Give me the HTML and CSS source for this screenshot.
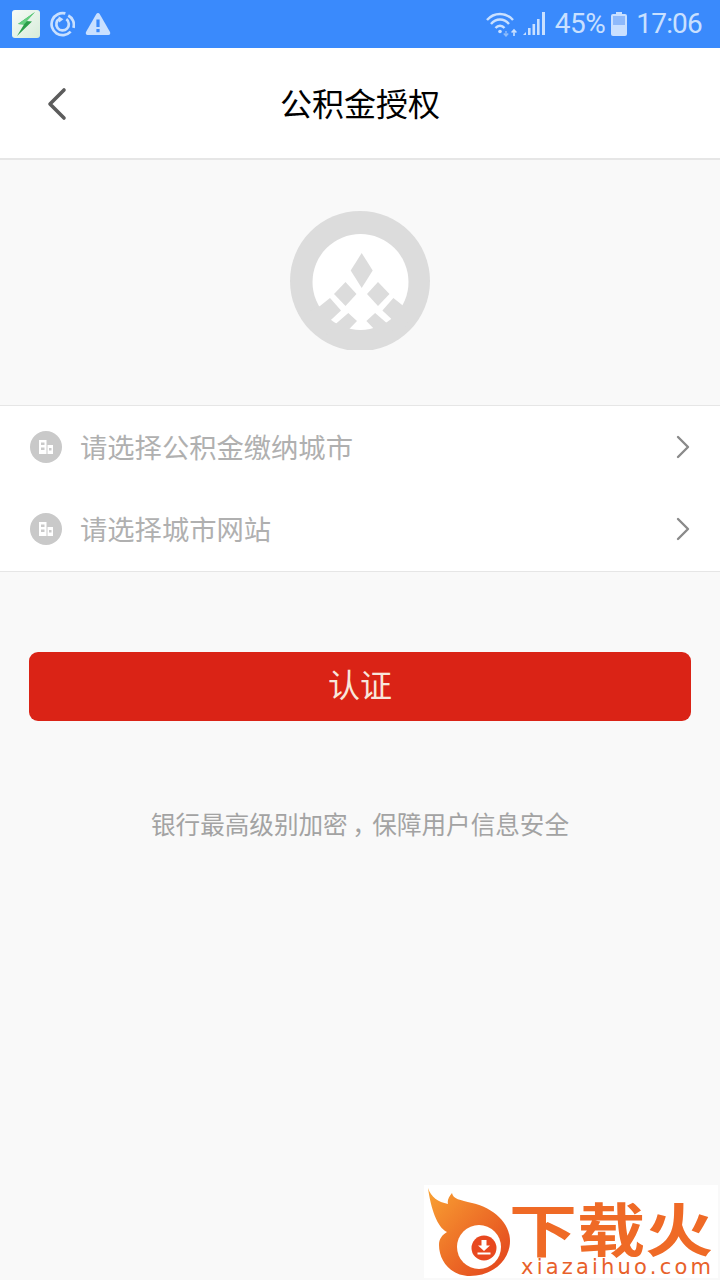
FILE: index.html
```html
<!DOCTYPE html>
<html>
<head>
<meta charset="utf-8">
<link rel="stylesheet" href="styles.css">
<title>公积金授权</title>
</head>
<body>
<div class="page">
  <div class="status-bar">
    <div class="status-left">
      <div class="app-icon">
        <svg width="28" height="28" viewBox="0 0 28 28">
          <path d="M23 2 L6 14 L12 14.5 L5 26 L20 11.5 L14 11 Z" fill="#2a9e49"/>
          <path d="M23 2 L6 14 L12 14.5 Z" fill="#63cf80"/>
        </svg>
      </div>
      <svg width="25" height="26" viewBox="0 0 26 26" fill="none" stroke="#c9e0ff">
        <path d="M16 2 A11.5 11.5 0 1 0 21.5 21" stroke-width="2.8"/>
        <path d="M19 4.2 A11 11 0 0 1 24.4 17" stroke-width="2.8"/>
        <path d="M10 7.5 A6.5 6.5 0 1 0 17 8" stroke-width="2.8"/>
        <path d="M9 5 L14 8 L9.5 11.5 Z" fill="#c9e0ff" stroke="none"/>
      </svg>
      <svg width="26" height="24" viewBox="0 0 26 24">
        <path d="M13 1 C13.8 1 14.3 1.4 14.7 2 L25 20 C25.7 21.4 25 23 23.4 23 L2.6 23 C1 23 .3 21.4 1 20 L11.3 2 C11.7 1.4 12.2 1 13 1 Z" fill="#c9e0ff"/>
        <rect x="11.4" y="7.5" width="3.2" height="7.5" fill="#3a8afc"/>
        <rect x="11.4" y="17" width="3.2" height="3.2" fill="#3a8afc"/>
      </svg>
    </div>
    <div class="status-right">
      <svg class="wifi" width="32" height="26" viewBox="0 0 32 26" fill="none" stroke="#c9e0ff" stroke-width="2.4">
        <path d="M1 9 C8 1 20 1 27 9"/>
        <path d="M5 13 C10 7 18 7 23 13"/>
        <path d="M9.5 17 C12 14 16 14 18.5 17"/>
        <circle cx="14" cy="20.5" r="1.8" fill="#c9e0ff" stroke="none"/>
        <path d="M20 25 V20 M17.8 22.5 L20 25 L22.2 22.5" stroke="#8fbdfb" stroke-width="1.4"/>
        <path d="M28 25 V19 M25.6 21.5 L28 19 L30.4 21.5" stroke-width="1.6"/>
      </svg>
      <svg class="signal" width="24" height="26" viewBox="0 0 24 26" fill="#c9e0ff">
        <path d="M1 24 L4 21 V24 Z"/>
        <rect x="6" y="17" width="2.6" height="7"/>
        <rect x="10.5" y="13" width="2.6" height="11"/>
        <rect x="15" y="8" width="2.6" height="16"/>
        <rect x="20" y="1" width="3" height="23"/>
      </svg>
      <span class="status-text percent">45%</span>
      <svg class="battery" width="16" height="24" viewBox="0 0 16 24">
        <rect x="5" y="0" width="6" height="3" fill="#c9e0ff"/>
        <rect x="0" y="2" width="16" height="22" rx="2" fill="#c9e0ff"/>
        <rect x="2" y="4" width="12" height="9" fill="#8db9fb"/>
      </svg>
      <span class="status-text clock">17:06</span>
    </div>
  </div>

  <div class="header">
    <svg class="back" width="24" height="34" viewBox="0 0 24 34" fill="none" stroke="#5c5c5c" stroke-width="3.6" stroke-linecap="round" stroke-linejoin="round">
      <path d="M19 3 L5 17 L19 31"/>
    </svg>
    <h1>公积金授权</h1>
  </div>

  <div class="logo-area">
    <svg width="140" height="139" viewBox="0 0 140 139">
      <circle cx="70" cy="70" r="70" fill="#dcdcdc"/>
      <circle cx="70.5" cy="71" r="48" fill="#fff"/>
      <g fill="#dcdcdc">
        <path d="M71.7 42 L82.7 59.5 L71.7 77 L60.7 59.5 Z"/>
        <path d="M55.5 71 L66.5 83 L55.5 95 L44 83 Z"/>
        <path d="M88 71 L99.5 83 L88 95 L77 83 Z"/>
        <path d="M30 95 L40 87 L51 99.5 L39 110.7 L42 125 L28 120 L20 100 Z"/>
        <path d="M113.4 95 L103.4 87 L92.4 99.5 L104.4 110.7 L101.4 125 L113 120 L123.4 100 Z"/>
        <path d="M58.3 102 L67 110 L58.3 119 L60 126 L35 126 L45 113.5 Z"/>
        <path d="M85.1 102 L76.4 110 L85.1 119 L83.4 126 L108.4 126 L98.4 113.5 Z"/>
      </g>
    </svg>
  </div>

  <div class="list">
    <div class="row">
      <div class="row-icon">
        <svg width="20" height="20" viewBox="0 0 20 20">
          <path d="M3 3 H10.5 V17 H3 Z M11.5 8 H17 V17 H11.5 Z" fill="#fff"/>
          <path d="M5 5.5 H8.5 V8 H5 Z M5 10.5 H8.5 V13 H5 Z M13 11 H15.5 V13.5 H13 Z" fill="#c9c9c9"/>
        </svg>
      </div>
      <span class="row-label">请选择公积金缴纳城市</span>
      <svg class="chevron" width="16" height="24" viewBox="0 0 16 24" fill="none" stroke="#8a8a8a" stroke-width="2.4" stroke-linecap="round" stroke-linejoin="round">
        <path d="M3 2 L13 12 L3 22"/>
      </svg>
    </div>
    <div class="row">
      <div class="row-icon">
        <svg width="20" height="20" viewBox="0 0 20 20">
          <path d="M3 3 H10.5 V17 H3 Z M11.5 8 H17 V17 H11.5 Z" fill="#fff"/>
          <path d="M5 5.5 H8.5 V8 H5 Z M5 10.5 H8.5 V13 H5 Z M13 11 H15.5 V13.5 H13 Z" fill="#c9c9c9"/>
        </svg>
      </div>
      <span class="row-label">请选择城市网站</span>
      <svg class="chevron" width="16" height="24" viewBox="0 0 16 24" fill="none" stroke="#8a8a8a" stroke-width="2.4" stroke-linecap="round" stroke-linejoin="round">
        <path d="M3 2 L13 12 L3 22"/>
      </svg>
    </div>
  </div>

  <div class="submit">认证</div>
  <p class="note">银行最高级别加密<span class="comma">，</span>保障用户信息安全</p>

  <div class="watermark">
    <svg class="flame" width="88" height="93" viewBox="0 0 88 93">
      <defs>
        <linearGradient id="flame-fill" x1="0" y1="0" x2="1" y2="1">
          <stop offset="0" stop-color="#f9a233"/>
          <stop offset="1" stop-color="#e2401c"/>
        </linearGradient>
      </defs>
      <path d="M4 3 C7 12 14 17 24 19 C23 15 25 12 28 8 C29 14 36 15 48 18 C70 23 86 38 86 56 C86 76 68 91 46 91 C27 91 15 76 15 60 C15 54 18 50 23 47 C13 42 7 24 4 3 Z" fill="url(#flame-fill)"/>
      <circle cx="55" cy="62" r="22" fill="#fff"/>
      <circle cx="60" cy="63" r="12.5" fill="#e8481f"/>
      <path d="M57.5 55 H62.5 V60.5 H66 L60 66 L54 60.5 H57.5 Z M53.5 67.5 H66.5 V69.5 H53.5 Z" fill="#fff"/>
    </svg>
    <div class="brand">
      <div class="brand-name">下载火</div>
      <div class="brand-url">xiazaihuo.com</div>
    </div>
  </div>
</div>
</body>
</html>
```

FILE: styles.css
```css
body {
	margin: 0;
	font-family: "Noto Sans CJK SC", "Noto Sans", sans-serif;
	background-color: #f9f9f9;
}
.page {
	position: relative;
	width: 720px;
	height: 1280px;
	overflow: hidden;
}
.status-bar {
	height: 48px;
	background-color: #3a8afc;
	display: flex;
	align-items: center;
	justify-content: space-between;
	padding: 0 18px 0 12px;
}
.status-left, .status-right {
	display: flex;
	align-items: center;
}
.status-left {
	gap: 10px;
}
.app-icon {
	width: 28px;
	height: 28px;
	border-radius: 3px;
	background-image: linear-gradient(135deg, #f7fbf7, #d6ecd9);
}
.app-icon svg {
	display: block;
}
.status-text {
	font-family: Roboto, sans-serif;
	font-size: 28px;
	line-height: 32px;
	color: #c9e0ff;
}
.percent {
	letter-spacing: -0.5px;
	margin-right: 6px;
}
.clock { letter-spacing: -0.8px; }
.wifi { margin-right: 4px; }
.signal { margin-right: 9px; }
.battery { margin-right: 9px; }
.header {
	position: relative;
	height: 110px;
	background-color: #fff;
	border-bottom: 2px solid #e6e6e6;
	display: flex;
	align-items: center;
	justify-content: center;
}
.header h1 {
	margin: 0;
	padding-bottom: 2px;
	font-size: 32px;
	font-weight: 400;
	color: #000;
}
.back {
	position: absolute;
	left: 45px;
	top: 39px;
}
.logo-area {
	height: 245px;
	display: flex;
	justify-content: center;
	align-items: flex-start;
	padding-top: 51px;
	box-sizing: border-box;
}
.list {
	background-color: #fff;
	border-top: 1px solid #e6e6e6;
	border-bottom: 1px solid #e6e6e6;
	padding-bottom: 1px;
}
.row {
	height: 82px;
	display: flex;
	align-items: center;
	padding: 0 29px 0 30px;
}
.row-icon {
	width: 32px;
	height: 32px;
	border-radius: 50%;
	background-color: #c9c9c9;
	display: flex;
	align-items: center;
	justify-content: center;
	margin-right: 18px;
}
.row-label {
	flex: 1;
	padding-bottom: 3px;
	font-size: 27.3px;
	color: #b0b0b0;
}
.submit {
	margin: 80px 29px 0;
	height: 69px;
	padding-bottom: 8px;
	box-sizing: border-box;
	border-radius: 9px;
	background-color: #da2316;
	color: #f8e6dc;
	font-size: 32px;
	display: flex;
	align-items: center;
	justify-content: center;
}
.note {
	margin: 84px 0 0;
	text-align: center;
	font-size: 24.6px;
	color: #a3a3a3;
}
.comma {
	display: inline-block;
	width: 24.6px;
	text-align: center;
	font-feature-settings: "palt";
}
.watermark {
	position: absolute;
	left: 424px;
	top: 1185px;
	width: 294px;
	height: 93px;
	background-color: #fff;
	display: flex;
}
.brand {
	color: #ef6a26;
}
.brand-name {
	font-size: 68px;
	font-weight: 700;
	line-height: 56px;
	height: 56px;
	margin: 19px 0 0 -3px;
	white-space: nowrap;
	transform: scaleY(0.85);
	transform-origin: top;
}
.brand-url {
	margin: -2px 0 0 9px;
	font-family: "DejaVu Sans", sans-serif;
	font-size: 21px;
	line-height: 18px;
	letter-spacing: 3.2px;
	white-space: nowrap;
	color: #e8612a;
}
```
